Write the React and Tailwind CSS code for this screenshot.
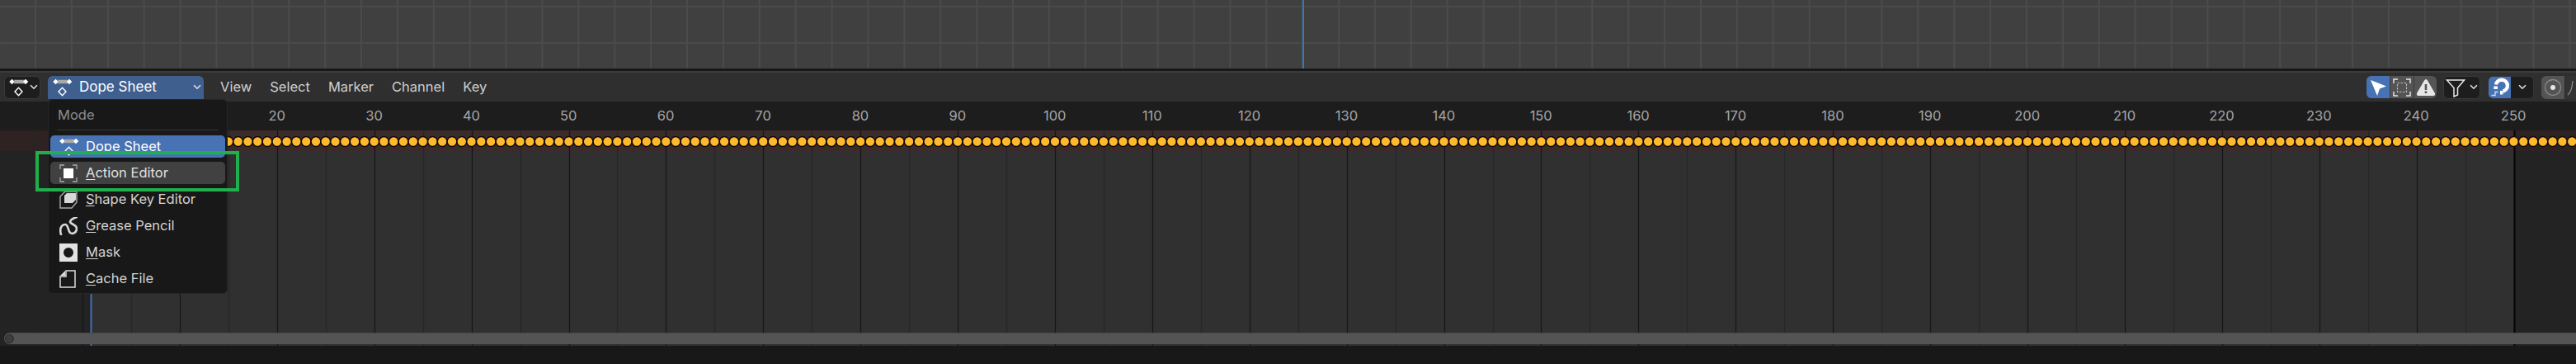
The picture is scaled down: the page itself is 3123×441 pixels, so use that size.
import React from "react";

const FRAME_PX = 11.79;
const FRAME_0 = 100;
const frameX = (f) => FRAME_0 + f * FRAME_PX;

const labels = [];
for (let f = 20; f <= 250; f += 10) labels.push(f);
const gridFrames = [];
for (let f = -5; f <= 255; f += 5) gridFrames.push(f);
const keyFrames = [];
for (let f = 1; f <= 258; f++) keyFrames.push(f);

const Chevron = ({ className = "" }) => (
  <svg width="10" height="7" viewBox="0 0 10 7" className={className}>
    <path d="M1 1.2 5 5.2 9 1.2" fill="none" stroke="#e0e0e0" strokeWidth="1.6" />
  </svg>
);

const DopeIcon = () => (
  <svg width="24" height="24" viewBox="0 0 24 24">
    <path d="M5.5 2.8h13q-2.2 2.2 0 4.400h-13q2.2-2.200 0-4.400z" fill="#a8a8a8" />
    <path d="M3.500 1.800 6.800 5 3.500 8.200 .2 5zM20 1.800 23.300 5 20 8.200 16.700 5z" fill="#fff" />
    <path d="M11.500 12.300 16 17 11.500 21.700 7 17z" fill="none" stroke="#fff" strokeWidth="1.4" />
  </svg>
);

const ActionIcon = () => (
  <svg width="22" height="22" viewBox="0 0 22 22">
    <path d="M1 6V1h5M16 1h5v5M21 16v5h-5M6 21H1v-5" fill="none" stroke="#aaa" strokeWidth="1.3" />
    <rect x="5" y="5" width="12" height="12" fill="#fff" />
  </svg>
);

const ShapeIcon = () => (
  <svg width="22" height="22" viewBox="0 0 22 22">
    <path d="M7 1h14v13l-6 7H1V7z" fill="none" stroke="#aaa" strokeWidth="1.4" />
    <path d="M9 3h11v8l-4 4H6V6z" fill="#d8d8d8" />
  </svg>
);

const GreaseIcon = () => (
  <svg width="22" height="22" viewBox="0 0 22 22">
    <path
      d="M2 21C0 15 2 9 7 9c4 0 3 7 6 10 3 2 8 0 8-5 0-5-7-5-8-8 0-3 5-5 8-6"
      fill="none"
      stroke="#d8d8d8"
      strokeWidth="2.6"
      strokeLinecap="round"
    />
  </svg>
);

const MaskIcon = () => (
  <svg width="22" height="22" viewBox="0 0 22 22">
    <path fillRule="evenodd" d="M0 0h22v22H0zM11 5a6 6 0 1 0 0 12 6 6 0 0 0 0-12z" fill="#e2e2e2" />
  </svg>
);

const CacheIcon = () => (
  <svg width="20" height="22" viewBox="0 0 20 22">
    <path d="M8 1h11v20H1V8h7z" fill="none" stroke="#dcdcdc" strokeWidth="1.5" />
    <path d="M1 7 7 1v6z" fill="#dcdcdc" />
  </svg>
);

const menuItems = [
  { label: "Dope Sheet", icon: <DopeIcon />, active: true },
  { label: "Action Editor", icon: <ActionIcon />, hover: true },
  { label: "Shape Key Editor", icon: <ShapeIcon /> },
  { label: "Grease Pencil", icon: <GreaseIcon /> },
  { label: "Mask", icon: <MaskIcon /> },
  { label: "Cache File", icon: <CacheIcon /> },
];

const ModeMenu = () => (
  <div className="absolute left-[58px] top-[120px] w-[218px] h-[236px] rounded-[6px] bg-[#181818] border border-[#252525] px-[2px] text-[16.5px]">
    <div className="h-[36px] pl-[9px] pt-[5px] text-[#8c8c8c] leading-[26px]">Mode</div>
    <div className="h-[1px] mx-[8px] bg-[#363636] mb-[6px]"></div>
    {menuItems.map((item) => (
      <div
        key={item.label}
        className={`h-[27px] mb-[5px] rounded-[5px] flex items-center ${
          item.active ? "bg-[#4772b3] text-white" : item.hover ? "bg-[#414141] text-[#e0e0e0]" : "text-[#d4d4d4]"
        }`}
      >
        <div className="w-[43px] pl-[11px] shrink-0 flex items-center">{item.icon}</div>
        <span className="leading-none">
          <u className="underline-offset-2">{item.label[0]}</u>
          {item.label.slice(1)}
        </span>
      </div>
    ))}
  </div>
);

const Toolbar = () => (
  <div className="flex items-center ml-auto shrink-0">
    <div className="flex h-[27px] w-[85px] rounded-[6px] overflow-hidden bg-[#545454] mr-[8px]">
      <div className="w-[28px] bg-[#4772b3] flex items-center justify-center">
        <svg width="22" height="22" viewBox="0 0 22 22">
          <path d="M2 2 21 9.5 13 12.5 10 21z" fill="#fff" />
        </svg>
      </div>
      <div className="w-[29px] flex items-center justify-center border-l border-[#3c3c3c]">
        <svg width="22" height="22" viewBox="0 0 22 22">
          <path d="M1 6V1h5M16 1h5v5M21 16v5h-5M6 21H1v-5" fill="none" stroke="#e6e6e6" strokeWidth="1.5" />
          <rect x="5.5" y="5.5" width="11" height="11" fill="none" stroke="#bbb" strokeWidth="1.2" strokeDasharray="2.5 1.5" />
        </svg>
      </div>
      <div className="w-[28px] flex items-center justify-center border-l border-[#3c3c3c]">
        <svg width="22" height="20" viewBox="0 0 22 20">
          <path fillRule="evenodd" d="M11 0q1 0 2 1.5l9 15.5q.5 3-2 3H2q-2.5 0-2-3L9 1.5Q10 0 11 0zM9.7 6v7h2.600V6zM9.7 14.500v2.500h2.600v-2.500z" fill="#e6e6e6" />
        </svg>
      </div>
    </div>
    <div className="flex items-center h-[28px] w-[45px] rounded-[6px] bg-[#1d1d1d] border border-[#3a3a3a] mr-[9px] pl-[2px]">
      <svg width="24" height="24" viewBox="0 0 24 24" className="mr-[5px]">
        <path d="M1.5 3h21l-8 9.500V21l-4.500 2v-10.500z" fill="none" stroke="#e6e6e6" strokeWidth="1.5" />
      </svg>
      <Chevron />
    </div>
    <div className="flex h-[28px] w-[56px] rounded-[6px] overflow-hidden bg-[#1d1d1d] border border-[#333] mr-[9px]">
      <div className="w-[27px] bg-[#4772b3] flex items-center justify-center">
        <svg width="24" height="24" viewBox="0 0 24 24">
          <path d="M7 8.500A7 7 0 1 1 15.500 16.500" fill="none" stroke="#fff" strokeWidth="4.400" />
          <path d="M4.300 10.500h4.700v3.500H4.300zM12 16h3.500v4.500H12z" fill="#fff" />
          <path d="M1.500 21.500h4.500v-4h3.500" fill="none" stroke="#cfe0f5" strokeWidth="1.3" />
        </svg>
      </div>
      <div className="flex-1 flex items-center justify-center">
        <Chevron />
      </div>
    </div>
    <div className="flex h-[28px] w-[42px] rounded-l-[6px] overflow-hidden">
      <div className="w-[28px] bg-[#545454] flex items-center justify-center">
        <svg width="22" height="22" viewBox="0 0 22 22">
          <circle cx="11" cy="11" r="9.5" fill="none" stroke="#8a8a8a" strokeWidth="1.3" />
          <circle cx="11" cy="11" r="3" fill="#e6e6e6" />
        </svg>
      </div>
      <div className="flex-1 bg-[#333333] border-l border-[#2a2a2a] flex items-center">
        <svg width="13" height="22" viewBox="0 0 13 22">
          <path d="M3 20q5-4 6-17" fill="none" stroke="#8a8a8a" strokeWidth="1.3" />
        </svg>
      </div>
    </div>
  </div>
);

const TimelineChart = () => (
  <svg width="3123" height="261" viewBox="0 0 3123 261" className="block">
    <rect width="3123" height="261" fill="#232323" />
    <rect width="3123" height="25" fill="#2f2222" />
    <rect x={frameX(1)} width={frameX(250) - frameX(1)} height="261" fill="#303030" />
    <rect x={frameX(1)} width={frameX(250) - frameX(1)} height="25" fill="#3b2b2b" />
    {gridFrames.map((f) => {
      const major = f % 10 === 0;
      return (
        <line
          key={f}
          x1={Math.round(frameX(f)) + 0.5}
          x2={Math.round(frameX(f)) + 0.5}
          y1="0"
          y2="261"
          stroke={f === 250 ? "#050505" : major ? "#161616" : "#262626"}
          strokeWidth={f === 250 ? 2 : 1.2}
        />
      );
    })}
    <line x1="110.5" x2="110.5" y1="0" y2="261" stroke="#4772b3" strokeWidth="2" />
    {keyFrames.map((f) => (
      <circle key={f} cx={frameX(f)} cy="13.5" r="5.9" fill="#ffb92e" stroke="#0c0c0c" strokeWidth="1.5" />
    ))}
  </svg>
);

export default function App() {
  return (
    <div className="relative w-[3123px] h-[441px] overflow-hidden flex flex-col bg-[#181818] font-[Inter,sans-serif] text-[16.5px]">
      {/* node editor grid above */}
      <div className="relative h-[83px] shrink-0 bg-[#404040] bg-[linear-gradient(to_right,#4b4b4b_2px,transparent_2px),linear-gradient(to_bottom,#4a4a4a_2px,transparent_2px)] bg-size-[43.9px_44px] bg-position-[42px_7px]">
        <div className="absolute left-[1579px] top-0 w-[1.5px] h-full bg-[#3f74b5]"></div>
      </div>
      <div className="h-[3px] shrink-0 bg-[#181818]"></div>
      <div className="h-[2px] shrink-0 bg-[#3c3c3c]"></div>

      {/* header */}
      <div className="h-[35px] shrink-0 bg-[#2f2f2f] flex items-center pl-[5px] text-[#cfcfcf]">
        <div className="w-[44px] h-[28px] rounded-[6px] bg-[#1d1d1d] border border-[#3a3a3a] flex items-center pl-[5px] gap-[1px] mr-[9px]">
          <DopeIcon />
          <Chevron />
        </div>
        <div className="w-[189px] h-[28px] rounded-t-[6px] bg-[#3f5f8f] flex items-center pl-[6px] pr-[3px] mr-[20px] text-white text-[17px]">
          <DopeIcon />
          <span className="ml-[8px] flex-1">Dope Sheet</span>
          <Chevron />
        </div>
        <div className="flex gap-[22px]">
          <span>View</span>
          <span>Select</span>
          <span>Marker</span>
          <span>Channel</span>
          <span>Key</span>
        </div>
        <Toolbar />
      </div>

      {/* frame ruler */}
      <div className="h-[35px] shrink-0 bg-[#1d1d1d] flex items-center text-[#a6a6a6] pl-[276.7px] overflow-hidden">
        {labels.map((f) => (
          <div key={f} className="w-[117.9px] shrink-0 text-center">
            {f}
          </div>
        ))}
      </div>

      {/* keyframes area */}
      <div className="relative h-[261px] shrink-0">
        <TimelineChart />
        <div className="absolute left-[5px] right-0 top-[245px] h-[14px] rounded-l-[7px] bg-[#545454] border-t border-[#4a4a4a] flex items-center pl-[1px]">
          <div className="w-[11px] h-[11px] rounded-full bg-[#3c3c3c] border border-[#2a2a2a]"></div>
        </div>
      </div>

      <ModeMenu />
      {/* green highlight */}
      <div className="absolute left-[43px] top-[183px] w-[247px] h-[49px] border-4 border-[#1fb04c]"></div>
    </div>
  );
}
